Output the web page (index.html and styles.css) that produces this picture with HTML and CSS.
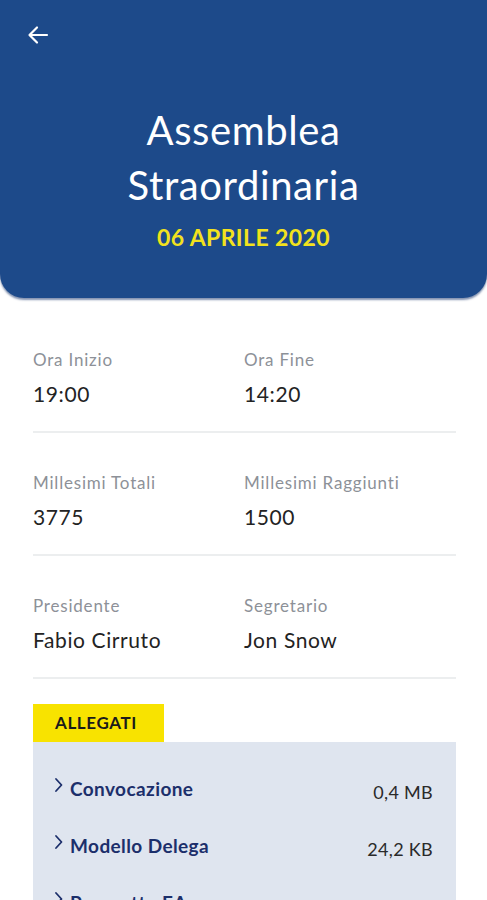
FILE: index.html
```html
<!DOCTYPE html>
<html lang="it">
<head>
    <meta charset="UTF-8">
    <meta name="viewport" content="width=device-width, initial-scale=1.0">
    <title>Assemblea Straordinaria</title>
    <link rel="stylesheet" href="styles.css">
</head>
<body>
    <div class="header">
        <div class="topbar">
            <svg class="back" width="24" height="24" viewBox="0 0 24 24">
                <path d="M21 12H4M11 4.5L3.5 12l7.5 7.5" fill="none" stroke="#fff" stroke-width="2.2" stroke-linecap="round" stroke-linejoin="round"/>
            </svg>
        </div>
        <h1 class="title">Assemblea<br>Straordinaria</h1>
        <div class="date">06 APRILE 2020</div>
    </div>

    <div class="content">
        <div class="info-row">
            <div class="info">
                <div class="label">Ora Inizio</div>
                <div class="value">19:00</div>
            </div>
            <div class="info">
                <div class="label">Ora Fine</div>
                <div class="value">14:20</div>
            </div>
        </div>
        <div class="info-row">
            <div class="info">
                <div class="label">Millesimi Totali</div>
                <div class="value">3775</div>
            </div>
            <div class="info">
                <div class="label">Millesimi Raggiunti</div>
                <div class="value">1500</div>
            </div>
        </div>
        <div class="info-row">
            <div class="info">
                <div class="label">Presidente</div>
                <div class="value">Fabio Cirruto</div>
            </div>
            <div class="info">
                <div class="label">Segretario</div>
                <div class="value">Jon Snow</div>
            </div>
        </div>

        <div class="attachments">
            <div class="tab">ALLEGATI</div>
            <ul class="files">
                <li>
                    <span class="name">
                        <svg class="chev" width="9" height="16" viewBox="0 0 9 16"><path d="M2 2l5.5 6L2 14" fill="none" stroke="#1c2f6b" stroke-width="1.8" stroke-linecap="round" stroke-linejoin="round"/></svg>
                        Convocazione
                    </span>
                    <span class="size">0,4 MB</span>
                </li>
                <li>
                    <span class="name">
                        <svg class="chev" width="9" height="16" viewBox="0 0 9 16"><path d="M2 2l5.5 6L2 14" fill="none" stroke="#1c2f6b" stroke-width="1.8" stroke-linecap="round" stroke-linejoin="round"/></svg>
                        Modello Delega
                    </span>
                    <span class="size">24,2 KB</span>
                </li>
                <li>
                    <span class="name">
                        <svg class="chev" width="9" height="16" viewBox="0 0 9 16"><path d="M2 2l5.5 6L2 14" fill="none" stroke="#1c2f6b" stroke-width="1.8" stroke-linecap="round" stroke-linejoin="round"/></svg>
                        Prospetto EA
                    </span>
                    <span class="size">12,4 KB</span>
                </li>
            </ul>
        </div>
    </div>
</body>
</html>
```

FILE: styles.css
```css
body {
    font-family: Lato, "Open Sans", sans-serif;
    background-color: #fff;
    margin: 0;
    padding: 0;
    overflow: hidden;
    height: 900px;
}
.header {
    background-color: #1d4a8a;
    border-radius: 0 0 24px 24px;
    box-shadow: 0 2px 2px rgba(10, 40, 100, 0.5);
    height: 298px;
    text-align: center;
    color: #fff;
}
.topbar {
    padding: 23px 0 0 26px;
    height: 50px;
    text-align: left;
}
.title {
    margin: 30px 0 0;
    font-size: 40px;
    font-weight: 400;
    letter-spacing: 0.6px;
    line-height: 55px;
}
.date {
    margin-top: 10px;
    font-size: 23px;
    font-weight: 700;
    letter-spacing: 0.4px;
    color: #f2e21d;
}
.content {
    padding: 50px 31px 0 33px;
}
.info-row {
    display: flex;
    border-bottom: 2px solid #eceeef;
    padding-bottom: 25px;
    margin-bottom: 38px;
}
.info {
    width: 211px;
}
.label {
    font-size: 17px;
    letter-spacing: 0.8px;
    color: #8d9198;
    line-height: 24px;
}
.value {
    font-size: 21px;
    letter-spacing: 0.6px;
    color: #232323;
    margin-top: 10px;
    line-height: 24px;
}
.attachments {
    margin-top: -13px;
}
.tab {
    display: inline-block;
    background-color: #f8e300;
    color: #1b1b1b;
    font-size: 17px;
    font-weight: 700;
    letter-spacing: 0.6px;
    padding: 8px 22px 9px 22px;
    width: 87px;
}
.files {
    list-style-type: none;
    margin: 0;
    padding: 28px 23px 0 21px;
    background-color: #dfe5ef;
    height: 200px;
}
.files li {
    display: flex;
    justify-content: space-between;
    align-items: center;
    height: 57px;
    margin-top: -10px;
    margin-bottom: 10px;
}
.name {
    display: flex;
    align-items: center;
    gap: 7px;
    color: #1c2f6b;
    font-size: 19px;
    font-weight: 700;
    letter-spacing: 0.4px;
}
.chev {
    position: relative;
    top: -4px;
}
.size {
    color: #2a2a2a;
    font-size: 18px;
    letter-spacing: 0.3px;
    position: relative;
    top: 3px;
}
```
